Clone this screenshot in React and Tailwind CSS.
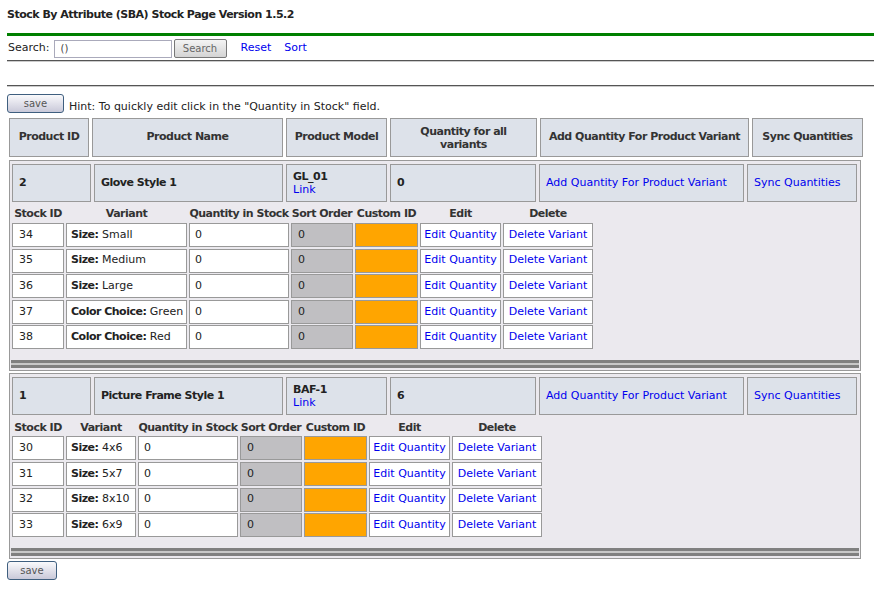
import React from 'react';

const font = { fontFamily: '"DejaVu Sans", Verdana, sans-serif' };

const blocks = [
  {
    id: '2',
    name: 'Glove Style 1',
    model: 'GL_01',
    total: '0',
    widths: ['w-[52px]', 'w-[121px]', 'w-[100px]', 'w-[62px]', 'w-[63px]', 'w-[81px]', 'w-[90px]'],
    rows: [
      ['34', 'Size:', 'Small'],
      ['35', 'Size:', 'Medium'],
      ['36', 'Size:', 'Large'],
      ['37', 'Color Choice:', 'Green'],
      ['38', 'Color Choice:', 'Red'],
    ],
  },
  {
    id: '1',
    name: 'Picture Frame Style 1',
    model: 'BAF-1',
    total: '6',
    widths: ['w-[52px]', 'w-[70px]', 'w-[100px]', 'w-[62px]', 'w-[63px]', 'w-[81px]', 'w-[90px]'],
    rows: [
      ['30', 'Size:', '4x6'],
      ['31', 'Size:', '5x7'],
      ['32', 'Size:', '8x10'],
      ['33', 'Size:', '6x9'],
    ],
  },
];

const SaveButton = ({ w }) => (
  <button
    className={`${w} h-[19px] rounded-[3px] border border-[#3f5f7f] bg-gradient-to-b from-[#fafafc] to-[#c9c9d9] text-[10px] leading-none text-[#555]`}
  >
    save
  </button>
);

const bold = 'font-bold tracking-[-0.5px]';
const headCell = `flex items-center justify-center text-center border border-[#999] bg-[#dde2ea] ${bold} text-[#333]`;
const prodCell = 'flex items-center px-[6px] border border-[#999] bg-[#dde2ea] h-[38px]';
const varCell = 'flex items-center border border-[#999] h-[24px]';

const Block = ({ b }) => {
  const w = b.widths;
  return (
    <div className="ml-[9px] w-[852px] border border-[#999] bg-[#ebe9ee] pt-[3px] pb-[2px]">
      <div className="flex gap-[3px] pl-[2px]">
        <div className={`${prodCell} w-[79px] ${bold}`}>{b.id}</div>
        <div className={`${prodCell} w-[189px] ${bold}`}>{b.name}</div>
        <div className={`${prodCell} w-[101px] flex-col !items-start justify-center`}>
          <span className={`${bold} leading-[13px]`}>{b.model}</span>
          <span className="text-[#0000ee] leading-[13px]">Link</span>
        </div>
        <div className={`${prodCell} w-[146px] ${bold}`}>{b.total}</div>
        <div className={`${prodCell} w-[205px] text-[#0000ee]`}>Add Quantity For Product Variant</div>
        <div className={`${prodCell} w-[110px] text-[#0000ee]`}>Sync Quantities</div>
      </div>

      <div className={`flex gap-[2px] pl-[2px] mt-[4px] h-[17px] items-center ${bold} text-[#333]`}>
        <div className={`${w[0]} text-center whitespace-nowrap`}>Stock ID</div>
        <div className={`${w[1]} text-center`}>Variant</div>
        <div className={`${w[2]} text-center whitespace-nowrap`}>Quantity in Stock</div>
        <div className={`${w[3]} text-center whitespace-nowrap`}>Sort Order</div>
        <div className={`${w[4]} text-center whitespace-nowrap`}>Custom ID</div>
        <div className={`${w[5]} text-center`}>Edit</div>
        <div className={`${w[6]} text-center`}>Delete</div>
      </div>

      <div className="flex flex-col gap-[1.6px] pl-[2px]">
        {b.rows.map((r) => (
          <div key={r[0]} className="flex gap-[2px]">
            <div className={`${varCell} ${w[0]} bg-white pl-[6px]`}>{r[0]}</div>
            <div className={`${varCell} ${w[1]} bg-white pl-[4px] whitespace-nowrap`}>
              <span className={bold}>{r[1]}</span>&nbsp;{r[2]}
            </div>
            <div className={`${varCell} ${w[2]} bg-white pl-[5px]`}>0</div>
            <div className={`${varCell} ${w[3]} bg-[#c0bfc2] pl-[6px]`}>0</div>
            <div className={`${varCell} ${w[4]} bg-[#ffa500]`}></div>
            <div className={`${varCell} ${w[5]} bg-white justify-center text-[#0000ee] whitespace-nowrap`}>Edit Quantity</div>
            <div className={`${varCell} ${w[6]} bg-white justify-center text-[#0000ee] whitespace-nowrap`}>Delete Variant</div>
          </div>
        ))}
      </div>

      <div className="mt-[11px] mx-[1px]">
        <div className="h-[3px] bg-[#808080]"></div>
        <div className="h-[2px] bg-[#c8c8c8]"></div>
        <div className="h-[3px] bg-[#808080]"></div>
      </div>
    </div>
  );
};

export default function App() {
  return (
    <div style={font} className="w-[874px] min-h-[589px] bg-white text-[11px] text-[#222]">
      <div className={`pl-[7px] pt-[7px] h-[33px] ${bold} text-[11px]`}>
        Stock By Attribute (SBA) Stock Page Version 1.5.2
      </div>
      <div className="ml-[7px] h-[3px] bg-[#008000]"></div>

      <div className="flex items-center h-[23px] pl-[8px] pt-[2px]">
        <span className="mr-[4px]">Search:</span>
        <div className="w-[118px] h-[18px] border border-[#aab] bg-white pl-[6px] text-[10px] leading-[16px] text-[#444]">()</div>
        <button className="ml-[2px] w-[53px] h-[19px] rounded-[2px] border border-[#777] bg-gradient-to-b from-[#f4f4f4] to-[#d4d4d4] text-[10px] leading-none text-[#666]">
          Search
        </button>
        <span className="ml-[14px] text-[#0000ee]">Reset</span>
        <span className="ml-[13px] text-[#0000ee]">Sort</span>
      </div>

      <div className="ml-[7px] mt-[1px] border-t border-t-[#555] border-b border-b-[#ccc]"></div>
      <div className="h-[23px]"></div>
      <div className="ml-[7px] border-t border-t-[#555] border-b border-b-[#ccc]"></div>

      <div className="flex items-end pl-[7px] mt-[6px] h-[20px]">
        <SaveButton w="w-[57px]" />
        <span className="ml-[5px] leading-[12px]">Hint: To quickly edit click in the "Quantity in Stock" field.</span>
      </div>

      <div className="flex gap-[3px] ml-[9px] mt-[5px]">
        <div className={`${headCell} w-[80px] h-[39px]`}>Product ID</div>
        <div className={`${headCell} w-[191px] h-[39px]`}>Product Name</div>
        <div className={`${headCell} w-[101px] h-[39px]`}>Product Model</div>
        <div className={`${headCell} w-[147px] h-[39px] leading-[13px]`}>
          Quantity for all<br />variants
        </div>
        <div className={`${headCell} w-[209px] h-[39px] whitespace-nowrap`}>Add Quantity For Product Variant</div>
        <div className={`${headCell} w-[111px] h-[39px]`}>Sync Quantities</div>
      </div>

      <div className="mt-[3px]">
        <Block b={blocks[0]} />
      </div>
      <div className="mt-[2px]">
        <Block b={blocks[1]} />
      </div>

      <div className="pl-[7px] mt-[2px]">
        <SaveButton w="w-[50px]" />
      </div>
    </div>
  );
}
